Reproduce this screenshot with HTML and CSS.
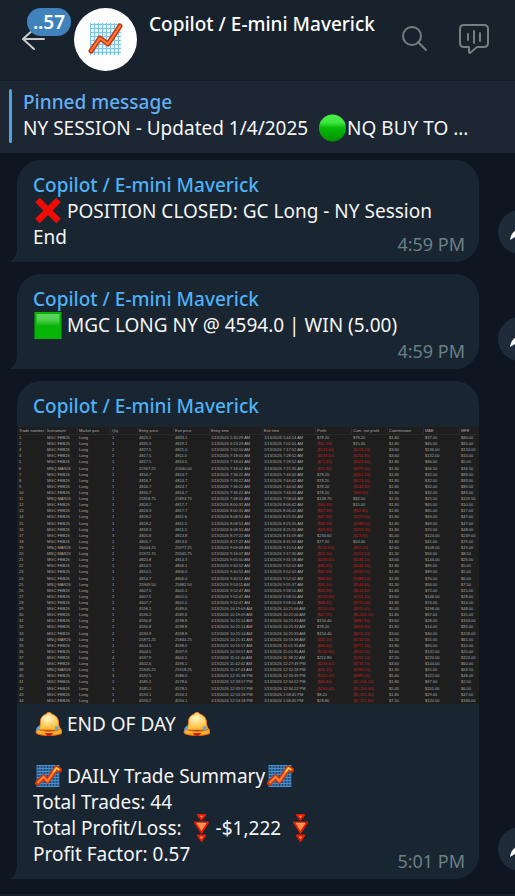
FILE: index.html
```
<!DOCTYPE html>
<html lang="en">
<head>
    <meta charset="UTF-8">
    <meta name="viewport" content="width=device-width, initial-scale=1.0">
    <title>Copilot / E-mini Maverick</title>
    <link rel="stylesheet" href="styles.css">
</head>
<body>
    <!-- Shared icons -->
    <svg class="sprite" aria-hidden="true">
        <defs>
            <linearGradient id="g-green" x1="0" y1="0" x2="0" y2="1">
                <stop offset="0" stop-color="#4df04d"/>
                <stop offset="0.3" stop-color="#3fe53f"/>
                <stop offset="0.5" stop-color="#06b906"/>
                <stop offset="1" stop-color="#058f05"/>
            </linearGradient>
            <linearGradient id="g-shine" x1="0" y1="0" x2="0" y2="1">
                <stop offset="0" stop-color="#5fd55f"/>
                <stop offset="0.5" stop-color="#4fce4f"/>
                <stop offset="1" stop-color="#06b406"/>
            </linearGradient>
            <radialGradient id="g-bell" cx="0.45" cy="0.35" r="0.6">
                <stop offset="0" stop-color="#fff6c4"/>
                <stop offset="1" stop-color="#fdb931"/>
            </radialGradient>
            <pattern id="p-grid" width="3" height="3" patternUnits="userSpaceOnUse">
                <rect width="3" height="3" fill="#234a72"/>
                <path d="M0 .5h3M.5 0v3" stroke="#4790d0"/>
            </pattern>
            <pattern id="p-grid-light" width="4" height="4" patternUnits="userSpaceOnUse">
                <rect width="4" height="4" fill="#e4f5fd"/>
                <path d="M0 .5h4M.5 0v4" stroke="#7cc3e6"/>
            </pattern>
        </defs>
        <symbol id="i-circle" viewBox="0 0 28 28">
            <circle cx="14" cy="14" r="13.5" fill="url(#g-green)"/>
        </symbol>
        <symbol id="i-square" viewBox="0 0 28 28">
            <rect x="1" y="1" width="27" height="27" fill="#06b406"/>
            <rect x="3" y="3" width="23" height="12" fill="url(#g-shine)"/>
        </symbol>
        <symbol id="i-cross" viewBox="0 0 28 28">
            <path d="M4 3l21 21M25 3L4 24" stroke="#ee0d05" stroke-width="6.5"/>
        </symbol>
        <symbol id="i-bell" viewBox="0 0 28 28">
            <path d="M3 20c3-2 4-4 4-8C7 7 10 5 13 4c0-2 5-2 5 0 4 1 7 4 7 9 0 3 1 5 3 7z" fill="url(#g-bell)" stroke="#f57c1e" stroke-width="1"/>
            <path d="M4 19c7 3 17 3 23 0 2 2 2 4 0 5-6 2-17 2-23 0-2-1-2-3 0-5z" fill="#fdb02b" stroke="#ee5c13" stroke-width="1"/>
            <path d="M11 23h9l-3 3h-3z" fill="#c92106"/>
            <path d="M3 18l3-3v4l-3 3zM22 16l3 1-1 4-3-2z" fill="#4cabe8"/>
        </symbol>
        <symbol id="i-chart" viewBox="0 0 28 28">
            <rect x="3" y="3" width="23" height="22" fill="url(#p-grid)"/>
            <path d="M4 21l6-6 4 4 9-13 3 2" fill="none" stroke="#d3320d" stroke-width="5" stroke-linejoin="round" stroke-linecap="round"/>
            <path d="M4 21l6-6 4 4 9-13" fill="none" stroke="#ff8433" stroke-width="2"/>
            <path d="M20 10l3-4 3 2" fill="none" stroke="#ffc83c" stroke-width="2"/>
        </symbol>
        <symbol id="i-down" viewBox="0 0 28 30">
            <path d="M10 1h8l-4 5zM7 9h14l-7 11zM10 23h8l-4 6z" fill="#ff8d45" stroke="#e51b05" stroke-width="2" stroke-linejoin="round"/>
            <path d="M9 10h10" stroke="#ffb27a"/>
        </symbol>
        <symbol id="i-share" viewBox="0 0 44 44">
            <path d="M12 30c1-7 5-11 13-12v-6l12 10-12 9v-6c-5 0-9 2-13 5z" fill="#fff"/>
        </symbol>
    </svg>

    <div class="app">
        <header class="topbar">
            <button class="back" aria-label="Back">
                <svg width="24" height="24" viewBox="0 0 24 24"><path d="M12 2L1 12l11 10M1 12h21" fill="none" stroke="#c9cccb" stroke-width="2" stroke-linecap="round" stroke-linejoin="round"/></svg>
                <span class="badge">..57</span>
            </button>
            <div class="avatar">
                <svg width="63" height="63" viewBox="0 0 63 63">
                    <rect x="16" y="15" width="31" height="32" fill="url(#p-grid-light)"/>
                    <path d="M17 43l9-13 8 6 12-18" fill="none" stroke="#c93a14" stroke-width="5" stroke-linecap="round" stroke-linejoin="round"/>
                    <path d="M17 43l9-13 8 6 12-18" fill="none" stroke="#ff7c38" stroke-width="2" stroke-linecap="round" stroke-linejoin="round"/>
                </svg>
            </div>
            <h1>Copilot / E-mini Maverick</h1>
            <div class="actions">
                <button aria-label="Search">
                    <svg width="26" height="26" viewBox="0 0 26 26"><g fill="none" stroke="#777e81" stroke-width="2" stroke-linecap="round"><circle cx="10" cy="10" r="9"/><path d="M16 16l8 8"/></g></svg>
                </button>
                <button aria-label="Live stream">
                    <svg width="30" height="30" viewBox="0 0 30 30"><g fill="none" stroke="#777e81" stroke-width="2" stroke-linecap="round" stroke-linejoin="round"><path d="M5 1h20q4 0 4 4v14q0 4-4 4h-7l-7 6q-1 0-1-1v-5H5q-4 0-4-4V5q0-4 4-4z"/><path d="M9 10v6M15 7v12M21 9v8"/></g></svg>
                </button>
            </div>
        </header>

        <a class="pinned" href="#">
            <strong>Pinned message</strong>
            <span>NY SESSION - Updated 1/4/2025&nbsp; <svg class="emoji"><use href="#i-circle"/></svg>NQ BUY TO ...</span>
        </a>

        <main class="chat">
            <div class="message">
                <div class="bubble">
                    <h2>Copilot / E-mini Maverick</h2>
                    <p><svg class="emoji"><use href="#i-cross"/></svg> POSITION CLOSED: GC Long - NY Session End</p>
                    <time class="tucked">4:59 PM</time>
                </div>
                <button class="share" aria-label="Share"><svg width="44" height="44"><use href="#i-share"/></svg></button>
            </div>

            <div class="message">
                <div class="bubble">
                    <h2>Copilot / E-mini Maverick</h2>
                    <p><svg class="emoji"><use href="#i-square"/></svg> MGC LONG NY @ 4594.0 | WIN (5.00)</p>
                    <time>4:59 PM</time>
                </div>
                <button class="share" aria-label="Share"><svg width="44" height="44"><use href="#i-share"/></svg></button>
            </div>

            <div class="message">
                <div class="bubble">
                    <h2>Copilot / E-mini Maverick</h2>
                    <table class="trades">
                        <colgroup>
                            <col class="c-num"><col class="c-inst"><col class="c-pos"><col class="c-qty">
                            <col class="c-money"><col class="c-money"><col class="c-time"><col class="c-time">
                            <col class="c-money"><col class="c-money"><col class="c-money"><col class="c-money"><col class="c-mfe">
                        </colgroup>
                        <thead>
                            <tr>
                                <th>Trade number</th><th>Instrument</th><th>Market pos.</th><th>Qty</th>
                                <th>Entry price</th><th>Exit price</th><th>Entry time</th><th>Exit time</th>
                                <th>Profit</th><th>Cum. net profit</th><th>Commission</th><th>MAE</th><th>MFE</th>
                            </tr>
                        </thead>
                        <tbody id="trades"></tbody>
                    </table>
                    <p><svg class="emoji"><use href="#i-bell"/></svg> END OF DAY <svg class="emoji"><use href="#i-bell"/></svg></p>
                    <br>
                    <p><svg class="emoji"><use href="#i-chart"/></svg> DAILY Trade Summary<svg class="emoji"><use href="#i-chart"/></svg></p>
                    <p>Total Trades: 44</p>
                    <p>Total Profit/Loss: <svg class="emoji"><use href="#i-down"/></svg>-$1,222 <svg class="emoji"><use href="#i-down"/></svg></p>
                    <p>Profit Factor: 0.57</p>
                    <time class="tucked">5:01 PM</time>
                </div>
                <button class="share" aria-label="Share"><svg width="44" height="44"><use href="#i-share"/></svg></button>
            </div>
        </main>
        <footer class="composer"></footer>
    </div>

    <script src="script.js"></script>
</body>
</html>
```
FILE: styles.css
```
* {
    box-sizing: border-box;
}
body {
    margin: 0;
    background-color: #0e1621;
    color: #f5f5f5;
    font-family: 'Noto Sans', 'Open Sans', sans-serif;
    font-size: 19px;
    line-height: 26px;
}
h1, h2, p {
    margin: 0;
    font-size: inherit;
}
h1, h2 {
    font-weight: 500;
}
button {
    padding: 0;
    border: none;
    background: none;
    color: inherit;
    font: inherit;
    cursor: pointer;
}
svg {
    display: block;
}
.sprite {
    position: absolute;
    width: 0;
    height: 0;
}
.app {
    display: flex;
    flex-direction: column;
    min-height: 100vh;
    overflow: hidden;
}
.emoji {
    display: inline-block;
    width: 29px;
    height: 28px;
    margin: -4px 0;
    vertical-align: -3px;
    overflow: visible;
}

/* Top bar */
.topbar {
    display: flex;
    align-items: center;
    height: 81px;
    padding: 0 26px 2px 22px;
    background-color: #18222c;
    border-bottom: 1px solid #141d26;
}
.back {
    position: relative;
    width: 52px;
}
.badge {
    position: absolute;
    left: 5px;
    bottom: 15px;
    width: 44px;
    border-radius: 14px;
    background-color: #4082bc;
    color: #fff;
    font-weight: 600;
    line-height: 28px;
}
.avatar {
    border-radius: 50%;
    background-color: #fff;
}
.topbar h1 {
    flex: 1;
    align-self: flex-start;
    padding: 11px 0 0 12px;
    color: #fff;
    white-space: nowrap;
}
.actions {
    display: flex;
    align-items: center;
    gap: 31px;
}

/* Pinned message */
.pinned {
    position: relative;
    display: flex;
    flex-direction: column;
    padding: 8px 23px 12px;
    background-color: #1c2733;
    color: #f5f5f5;
    text-decoration: none;
    white-space: nowrap;
}
.pinned::before {
    content: "";
    position: absolute;
    left: 9px;
    top: 8px;
    bottom: 10px;
    width: 3px;
    border-radius: 2px;
    background-color: #4fa6de;
}
.pinned strong {
    color: #62aff5;
    font-weight: 500;
}

/* Messages */
.chat {
    flex: 1;
    display: flex;
    flex-direction: column;
    gap: 12px;
    padding: 7px 0 15px 17px;
}
.message {
    display: flex;
    align-items: flex-end;
    gap: 19px;
    margin-right: -27px;
}
.bubble {
    position: relative;
    flex: 1;
    min-width: 0;
    padding: 12px 14px 5px 16px;
    border-radius: 24px 24px 24px 0;
    background-color: #192632;
}
.bubble::before {
    content: "";
    position: absolute;
    left: -9px;
    bottom: 0;
    width: 9px;
    height: 14px;
    background: radial-gradient(ellipse 9px 14px at 0 0, transparent 98%, #192632 100%);
}
.bubble h2 {
    color: #4fb1f6;
}
.bubble time {
    display: block;
    width: fit-content;
    margin-left: auto;
    color: #6c7f86;
    font-size: 18px;
}
.bubble .tucked {
    margin-top: -19px;
}
.share {
    margin-bottom: 8px;
    border-radius: 50%;
    background-color: #1f2b39;
}

/* Trade log */
.trades {
    table-layout: fixed;
    width: calc(100% + 30px);
    height: 277px;
    margin: 8px -14px 7px -16px;
    border-spacing: 0;
    background-color: #1e1e1e;
    color: #aaa;
    font-family: 'Liberation Sans', sans-serif;
    font-size: 4px;
    line-height: 4px;
}
.trades th, .trades td {
    padding: 1px 0 1px 2px;
    text-align: left;
    font-weight: 400;
    white-space: nowrap;
}
.trades thead tr {
    height: 8px;
}
.trades th {
    border-bottom: 1px solid #292929;
}
.trades th + th {
    border-left: 1px solid #292929;
    padding-left: 1px;
}
.trades .loss {
    color: #c81c1c;
}
.c-num { width: 28px; }
.c-inst { width: 32px; }
.c-pos { width: 33px; }
.c-qty { width: 27px; }
.c-money { width: 36px; }
.c-time { width: 53px; }
.c-mfe { width: 20px; }

.composer {
    height: 2px;
    background-color: #17212b;
}
```
FILE: script.js
```
// instrument, qty, entry, exit, entry time, exit time, profit, cum. net profit, commission, MAE, MFE
const trades = `
MGC,1,4825.1,4833.1,5:30:29 AM,5:44:14 AM,$78.20,$78.20,$1.80,$37.00,$80.00
MGC,1,4835.5,4829.1,6:53:23 AM,7:02:01 AM,($62.80),$15.40,$1.80,$65.00,$65.00
MGC,2,4827.5,4821.0,7:02:10 AM,7:17:52 AM,($133.60),($118.20),$3.60,$136.00,$134.00
MGC,2,4817.5,4811.0,7:18:01 AM,7:28:52 AM,($133.60),($251.80),$3.60,$132.00,$10.00
MGC,1,4817.5,4810.5,7:18:01 AM,7:28:52 AM,($71.80),($323.60),$1.80,$66.00,$5.00
MNQ,1,25967.25,25940.00,7:18:02 AM,7:21:35 AM,($55.80),($379.40),$1.30,$56.50,$34.50
MGC,1,4816.7,4824.7,7:36:22 AM,7:44:42 AM,$78.20,($301.20),$1.80,$32.00,$83.00
MGC,1,4816.7,4824.7,7:36:22 AM,7:44:42 AM,$78.20,($223.00),$1.80,$32.00,$83.00
MGC,1,4816.7,4824.7,7:36:22 AM,7:44:42 AM,$78.20,($144.80),$1.80,$32.00,$83.00
MGC,1,4816.7,4824.7,7:36:22 AM,7:44:43 AM,$78.20,($66.60),$1.80,$32.00,$83.00
MNQ,1,25818.75,25893.75,7:48:05 AM,7:58:04 AM,$148.70,$82.50,$1.30,$25.50,$159.50
MGC,1,4824.2,4817.7,8:00:31 AM,8:06:42 AM,($66.80),$15.00,$1.80,$65.00,$10.00
MGC,1,4824.3,4817.7,8:00:31 AM,8:06:42 AM,($67.80),($52.80),$1.80,$65.00,$17.00
MGC,1,4818.2,4811.6,8:08:51 AM,8:25:55 AM,($67.80),($119.00),$1.80,$69.00,$47.00
MGC,1,4818.2,4811.5,8:08:51 AM,8:25:55 AM,($68.80),($188.00),$1.80,$69.00,$47.00
MGC,1,4818.3,4811.5,8:08:51 AM,8:25:55 AM,($69.80),($258.40),$1.80,$70.00,$48.00
MGC,3,4805.8,4813.8,8:27:22 AM,8:31:59 AM,$234.60,($23.80),$5.40,$120.00,$249.00
MGC,1,4805.7,4813.6,8:27:22 AM,8:31:59 AM,$77.20,$53.40,$1.80,$41.00,$79.00
MNQ,2,26004.25,25977.25,9:09:08 AM,9:15:54 AM,($110.60),($57.20),$2.60,$108.00,$19.00
MNQ,1,25972.75,25945.75,9:16:07 AM,9:17:30 AM,($55.30),($112.50),$1.30,$56.00,$8.50
MGC,2,4820.8,4814.3,9:05:50 AM,9:31:18 AM,($133.60),($246.10),$3.60,$144.00,$26.00
MGC,1,4814.5,4806.1,9:40:52 AM,9:52:02 AM,($85.80),($331.90),$1.80,$89.00,$5.00
MGC,1,4814.5,4806.0,9:40:52 AM,9:52:02 AM,($87.80),($419.70),$1.80,$89.00,$5.00
MGC,1,4814.7,4806.0,9:40:52 AM,9:52:02 AM,($68.80),($488.50),$1.80,$70.00,$6.00
MNQ,1,25909.50,25882.50,9:53:11 AM,9:55:37 AM,($55.30),($544.80),$1.30,$56.00,$7.50
MGC,1,4607.5,4601.1,9:52:47 AM,9:58:10 AM,($66.80),($611.60),$1.80,$72.00,$15.00
MGC,2,4607.5,4601.0,9:52:47 AM,9:58:10 AM,($133.60),($701.20),$3.60,$146.00,$28.00
MGC,1,4607.7,4601.0,9:52:47 AM,9:58:10 AM,($68.80),($770.00),$1.80,$74.00,$14.00
MGC,3,4596.1,4589.6,10:19:09 AM,10:21:06 AM,($200.40),($970.40),$5.40,$198.00,$48.00
MGC,1,4596.2,4589.6,10:19:09 AM,10:21:06 AM,($67.80),($1,044.20),$1.80,$67.00,$15.00
MGC,2,4590.8,4598.8,10:21:14 AM,10:25:33 AM,$156.40,($887.80),$3.60,$28.00,$163.00
MGC,1,4590.8,4598.8,10:21:14 AM,10:25:33 AM,$78.20,($809.60),$1.80,$14.00,$82.00
MGC,2,4590.9,4598.8,10:21:14 AM,10:25:33 AM,$154.40,($655.20),$3.60,$30.00,$158.00
MNQ,1,25871.25,25844.25,10:21:31 AM,10:53:38 AM,($55.30),($710.50),$1.30,$55.00,$61.00
MGC,1,4604.5,4598.0,10:55:57 AM,11:01:35 AM,($66.80),($777.30),$1.80,$65.00,$10.00
MGC,2,4604.5,4597.9,10:55:57 AM,11:01:35 AM,($135.60),($912.90),$3.60,$132.00,$20.00
MGC,4,4597.9,4605.5,11:01:40 AM,11:38:22 AM,$212.80,($700.10),$7.20,$220.00,$324.00
MGC,2,4602.6,4596.1,11:42:42 AM,12:27:49 PM,($133.60),($733.70),$3.60,$144.00,$60.00
MNQ,1,25945.25,25918.25,11:47:43 AM,12:32:28 PM,($55.30),($789.00),$1.30,$55.00,$63.50
MGC,3,4592.5,4586.0,12:31:38 PM,12:33:49 PM,($200.40),($989.40),$5.40,$222.00,$48.00
MGC,1,4585.1,4578.6,12:33:57 PM,12:34:22 PM,($66.80),($1,056.20),$1.80,$67.00,$2.00
MGC,3,4585.1,4578.5,12:33:57 PM,12:34:22 PM,($203.40),($1,259.60),$5.40,$201.00,$6.00
MGC,1,4593.1,4594.1,12:53:18 PM,1:58:45 PM,$8.20,($1,251.40),$1.80,$29.00,$47.00
MGC,4,4593.2,4594.1,12:53:18 PM,1:58:45 PM,$28.80,($1,222.60),$7.20,$120.00,$184.00
`.trim().split('\n');

const body = document.getElementById('trades');

trades.forEach((line, i) => {
    // commas inside amounts ($1,044.20) are not separators
    const [inst, qty, entry, exit, entryTime, exitTime, ...money] = line.split(/,(?!\d{3}\.\d\d\))/);
    const month = inst === 'MNQ' ? 'MAR26' : 'FEB26';
    const cells = [i + 1, inst + ' ' + month, 'Long', qty, entry, exit,
        '1/13/2026 ' + entryTime, '1/13/2026 ' + exitTime, ...money];

    const row = body.insertRow();
    cells.forEach(value => {
        const cell = row.insertCell();
        cell.textContent = value;
        if (String(value).startsWith('(')) {
            cell.className = 'loss';
        }
    });
});
```
